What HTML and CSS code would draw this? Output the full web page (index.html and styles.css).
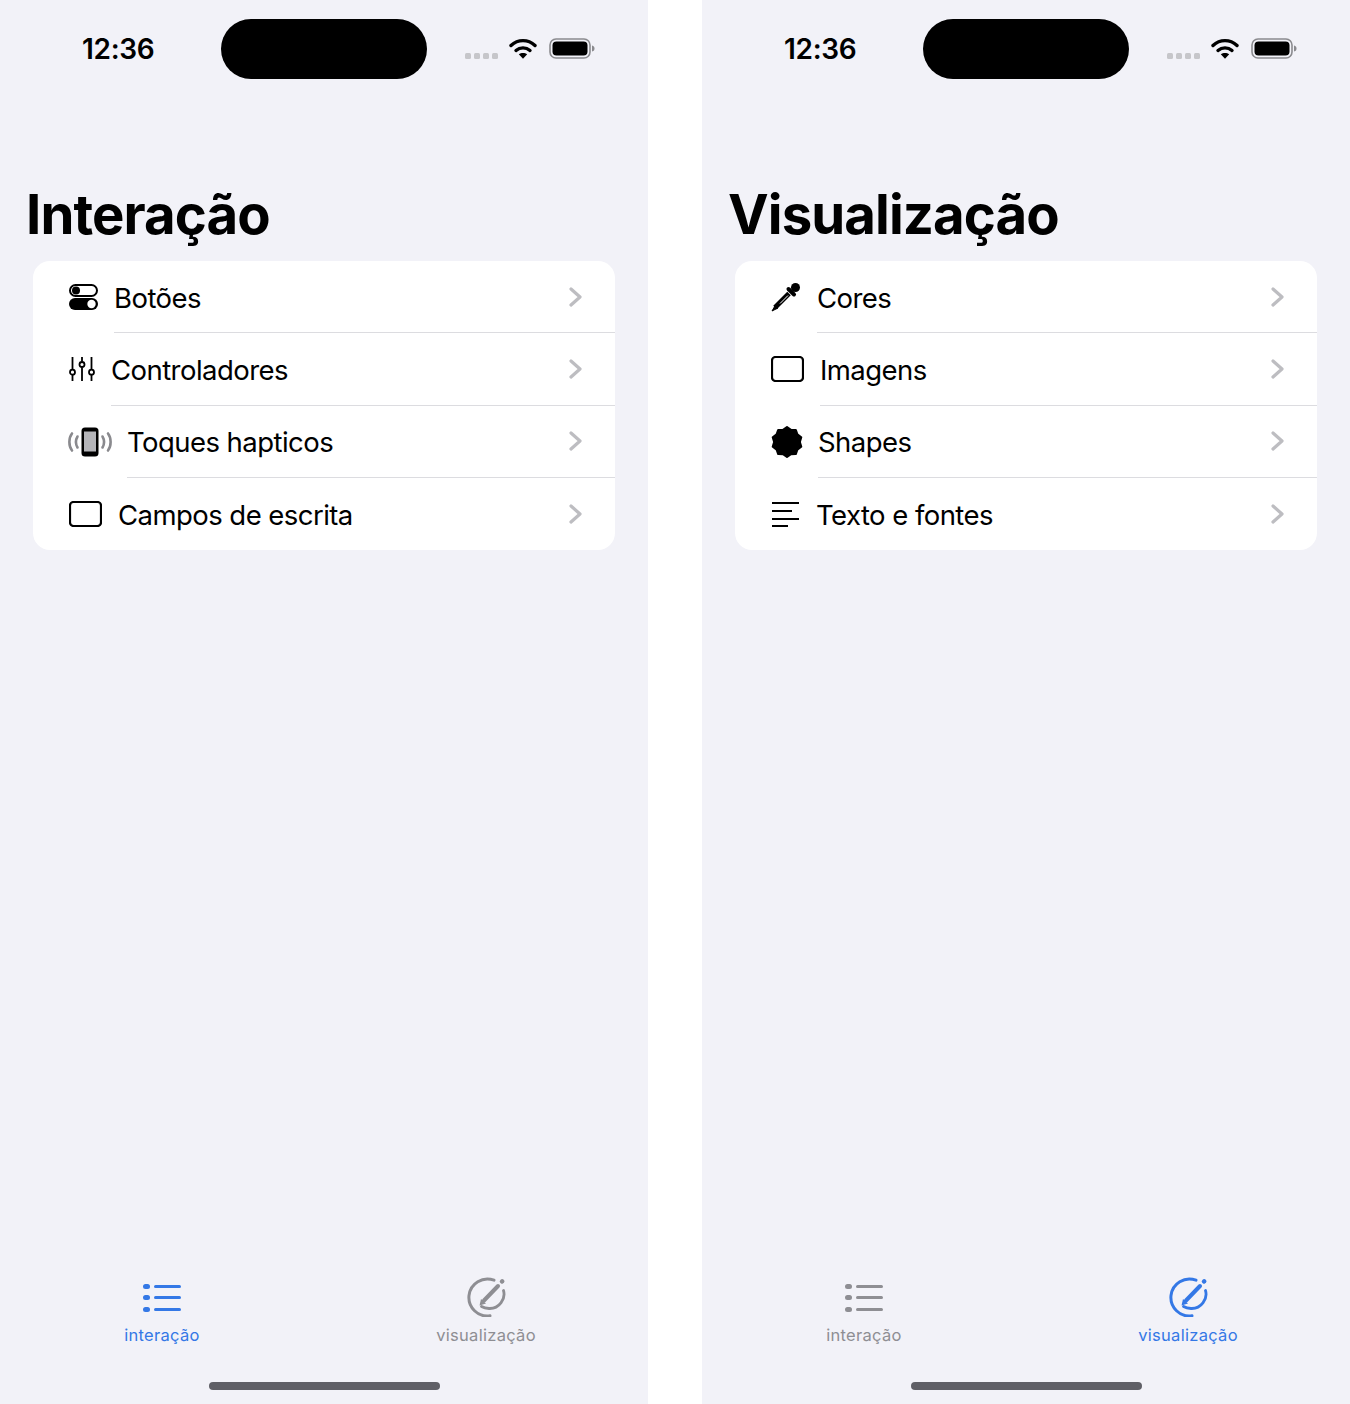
FILE: index.html
```html
<!DOCTYPE html>
<html>
<head>
	<title>Interação e Visualização</title>
	<meta name="viewport" content="width=device-width, initial-scale=1">
	<link rel="stylesheet" href="styles.css">
</head>
<body>
	<svg class="defs" width="0" height="0">
		<symbol id="i-signal" viewBox="0 0 33 6">
			<rect x="0" y="0" width="6" height="6" rx="1.5"/><rect x="9" y="0" width="6" height="6" rx="1.5"/><rect x="18" y="0" width="6" height="6" rx="1.5"/><rect x="27" y="0" width="6" height="6" rx="1.5"/>
		</symbol>
		<symbol id="i-wifi" viewBox="0 0 28 21">
			<g fill="none" stroke="#000" stroke-width="3.4" stroke-linecap="round">
				<path d="M2 7.5C9 1 19 1 26 7.5"/>
				<path d="M7 12.5C11 9 17 9 21 12.5"/>
			</g>
			<path d="M9.8 16.3C12.2 14.4 15.8 14.4 18.2 16.3L14 20.8Z"/>
		</symbol>
		<symbol id="i-battery" viewBox="0 0 46 21">
			<rect x="1" y="1" width="40" height="19" rx="6" fill="none" stroke="#8a8a8e" stroke-width="1.6"/>
			<rect x="3.5" y="3.5" width="35" height="14" rx="4"/>
			<path d="M43 7.5C45 8 45.5 9 45.5 10.500S45 13 43 13.500Z" fill="#8a8a8e"/>
		</symbol>
		<symbol id="i-chevron" viewBox="0 0 13 20">
			<polyline points="2,2 11,10 2,18" fill="none" stroke="#bdbdc1" stroke-width="3.200" stroke-linecap="round" stroke-linejoin="round"/>
		</symbol>
		<symbol id="i-rect" viewBox="0 0 33 26">
			<rect x="1" y="1" width="31" height="24" rx="3.500" fill="none" stroke="#000" stroke-width="2.200"/>
		</symbol>
		<symbol id="i-list" viewBox="0 0 40 40">
			<g fill="currentColor">
				<rect x="1" y="7" width="7" height="5" rx="2.500"/><rect x="1" y="18" width="7" height="5" rx="2.500"/><rect x="1" y="30" width="7" height="5" rx="2.500"/>
				<rect x="12" y="8" width="27" height="3" rx="1.500"/><rect x="12" y="19" width="27" height="3" rx="1.500"/><rect x="12" y="31" width="27" height="3" rx="1.500"/>
			</g>
		</symbol>
		<symbol id="i-pencil" viewBox="0 0 40 40">
			<g fill="none" stroke="currentColor" stroke-linecap="round">
				<path d="M28 3.200A18.500 18.500 0 1 0 24 38.800" stroke-width="3"/>
				<path d="M37.500 13.500C40 22 33 32 23 31.500C20 31.400 17.500 30.700 15.500 29.500" stroke-width="2.800"/>
				<path d="M18 23.500L32 9" stroke-width="4"/>
				<path d="M36 4.500L36.200 4.300" stroke-width="4.500"/>
			</g>
			<path d="M13.500 28.500L15 22L20 26.500Z" fill="currentColor"/>
		</symbol>
	</svg>

	<div class="phone">
		<div class="status">
			<div class="time">12:36</div>
			<div class="island"></div>
			<div class="status-icons">
				<svg class="signal" width="33" height="6"><use href="#i-signal"/></svg>
				<svg width="28" height="21"><use href="#i-wifi"/></svg>
				<svg width="46" height="21"><use href="#i-battery"/></svg>
			</div>
		</div>
		<h1 class="title">Interação</h1>
		<div class="card">
			<div class="row">
				<svg width="29" height="26" viewBox="0 0 29 26">
					<rect x="1" y="1" width="27" height="11" rx="5.500" fill="none" stroke="#000" stroke-width="2"/>
					<circle cx="7" cy="6.500" r="4"/>
					<rect y="14" width="29" height="12" rx="6"/>
					<circle cx="22.500" cy="20" r="4.200" fill="#fff"/>
				</svg>
				<div class="row-body"><span>Botões</span><svg class="chevron" width="13" height="20"><use href="#i-chevron"/></svg></div>
			</div>
			<div class="row">
				<svg width="26" height="26" viewBox="0 0 26 26">
					<g fill="none" stroke="#000" stroke-width="1.800">
						<path d="M3.500 1V13.500M3.500 19V25"/><circle cx="3.500" cy="16.200" r="2.500"/>
						<path d="M13 1V5.500M13 11.500V25"/><circle cx="13" cy="8.500" r="2.500"/>
						<path d="M22.500 1V13.500M22.500 19V25"/><circle cx="22.500" cy="16.200" r="2.500"/>
					</g>
				</svg>
				<div class="row-body"><span>Controladores</span><svg class="chevron" width="13" height="20"><use href="#i-chevron"/></svg></div>
			</div>
			<div class="row">
				<svg class="haptic" width="46" height="30" viewBox="0 0 46 30">
					<rect x="14.500" y="0.500" width="17" height="29" rx="3.500" fill="#000"/>
					<rect x="17" y="4.500" width="12" height="20" fill="#b4b4b8"/>
					<g fill="none" stroke="#8a8a8e" stroke-width="2.600" stroke-linecap="round">
						<path d="M5 6.500C1.500 11 1.500 19 5 23.500"/><path d="M10.500 9.500C8.500 13 8.500 17 10.500 20.500"/>
						<path d="M41 6.500C44.500 11 44.500 19 41 23.500"/><path d="M35.500 9.500C37.500 13 37.500 17 35.500 20.500"/>
					</g>
				</svg>
				<div class="row-body"><span>Toques hapticos</span><svg class="chevron" width="13" height="20"><use href="#i-chevron"/></svg></div>
			</div>
			<div class="row">
				<svg width="33" height="26"><use href="#i-rect"/></svg>
				<div class="row-body"><span>Campos de escrita</span><svg class="chevron" width="13" height="20"><use href="#i-chevron"/></svg></div>
			</div>
		</div>
		<div class="tabs">
			<div class="tab active">
				<svg width="40" height="40"><use href="#i-list"/></svg>
				<span>interação</span>
			</div>
			<div class="tab">
				<svg width="40" height="40"><use href="#i-pencil"/></svg>
				<span>visualização</span>
			</div>
		</div>
		<div class="home-bar"></div>
	</div>

	<div class="phone">
		<div class="status">
			<div class="time">12:36</div>
			<div class="island"></div>
			<div class="status-icons">
				<svg class="signal" width="33" height="6"><use href="#i-signal"/></svg>
				<svg width="28" height="21"><use href="#i-wifi"/></svg>
				<svg width="46" height="21"><use href="#i-battery"/></svg>
			</div>
		</div>
		<h1 class="title">Visualização</h1>
		<div class="card">
			<div class="row">
				<svg width="30" height="30" viewBox="0 0 30 30">
					<circle cx="24.500" cy="5.500" r="4.500"/>
					<path d="M17.500 7L23 12.500" stroke="#000" stroke-width="4" stroke-linecap="round"/>
					<path d="M18 11.500L4 25.500" stroke="#000" stroke-width="5"/>
					<path d="M4.500 23L1 29L7 26Z" stroke="#000" stroke-width="1"/>
					<path d="M17 13.500L9 21.500" stroke="#fff" stroke-width="1"/>
				</svg>
				<div class="row-body"><span>Cores</span><svg class="chevron" width="13" height="20"><use href="#i-chevron"/></svg></div>
			</div>
			<div class="row">
				<svg width="33" height="26"><use href="#i-rect"/></svg>
				<div class="row-body"><span>Imagens</span><svg class="chevron" width="13" height="20"><use href="#i-chevron"/></svg></div>
			</div>
			<div class="row">
				<svg class="seal" width="32" height="32" viewBox="1.500 1 29 30">
					<polygon points="16,2 19.700,4.600 24.200,4.700 25.700,8.900 29.300,11.700 28,16 29.300,20.300 25.700,23.100 24.200,27.300 19.700,27.400 16,30 12.300,27.400 7.800,27.300 6.300,23.100 2.700,20.300 4,16 2.700,11.700 6.300,8.900 7.800,4.700 12.300,4.600" stroke="#000" stroke-width="2" stroke-linejoin="round"/>
				</svg>
				<div class="row-body"><span>Shapes</span><svg class="chevron" width="13" height="20"><use href="#i-chevron"/></svg></div>
			</div>
			<div class="row">
				<svg width="29" height="26" viewBox="0 0 29 26">
					<g stroke="#000" stroke-width="2">
						<path d="M1 2H28"/><path d="M1 10H21"/><path d="M1 18H28"/><path d="M1 25H17"/>
					</g>
				</svg>
				<div class="row-body"><span>Texto e fontes</span><svg class="chevron" width="13" height="20"><use href="#i-chevron"/></svg></div>
			</div>
		</div>
		<div class="tabs">
			<div class="tab">
				<svg width="40" height="40"><use href="#i-list"/></svg>
				<span>interação</span>
			</div>
			<div class="tab active">
				<svg width="40" height="40"><use href="#i-pencil"/></svg>
				<span>visualização</span>
			</div>
		</div>
		<div class="home-bar"></div>
	</div>
</body>
</html>
```

FILE: styles.css
```css
html, body {
	margin: 0;
	background: #fff;
}
body {
	display: flex;
	gap: 54px;
	font-family: Inter, "Liberation Sans", sans-serif;
	color: #000;
}
.defs {
	position: absolute;
}
.phone {
	width: 648px;
	height: 1404px;
	display: flex;
	flex-direction: column;
	background: #f2f2f8;
}
.status {
	display: grid;
	grid-template-columns: 221px 206px 1fr;
	height: 60px;
	margin-top: 19px;
	align-items: center;
}
.time {
	padding-left: 82px;
	font-size: 28px;
	font-weight: 600;
	letter-spacing: -0.3px;
	line-height: 60px;
}
.island {
	height: 60px;
	border-radius: 30px;
	background: #000;
}
.status-icons {
	display: flex;
	align-items: center;
	padding-left: 38px;
	padding-bottom: 1px;
}
.status-icons svg:nth-child(2) {
	margin-left: 11px;
}
.status-icons svg:nth-child(3) {
	margin-left: 12px;
}
.signal {
	fill: #c6c6ca;
	margin-top: 14px;
}
.title {
	margin: 104px 0 16px 26px;
	font-size: 54.5px;
	font-weight: 700;
	line-height: 62px;
	letter-spacing: -0.9px;
}
.card {
	margin: 0 33px;
	background: #fff;
	border-radius: 17px;
	overflow: hidden;
}
.row {
	display: flex;
	align-items: center;
	gap: 16px;
	height: 72.25px;
	padding-left: 36px;
	font-size: 27.5px;
}
.row .haptic {
	margin: 0 -2px;
}
.row .seal {
	margin-right: -1px;
}
.row-body {
	flex: 1;
	height: 100%;
	box-sizing: border-box;
	display: flex;
	align-items: center;
	justify-content: space-between;
	padding-right: 33px;
	border-bottom: 1px solid #dcdce0;
	letter-spacing: -0.55px;
}
.row-body span {
	margin-top: 2px;
}
.row:last-child .row-body {
	border-bottom: 0;
}
.tabs {
	display: flex;
	margin-top: auto;
}
.tab {
	flex: 1;
	display: flex;
	flex-direction: column;
	align-items: center;
	gap: 8px;
	color: #8e8e93;
	font-size: 16.5px;
	line-height: 20px;
	letter-spacing: 0.3px;
}
.tab.active {
	color: #3478e6;
}
.home-bar {
	width: 231px;
	height: 8px;
	margin: 37px auto 14px;
	border-radius: 4px;
	background: #5f5f66;
}
```
